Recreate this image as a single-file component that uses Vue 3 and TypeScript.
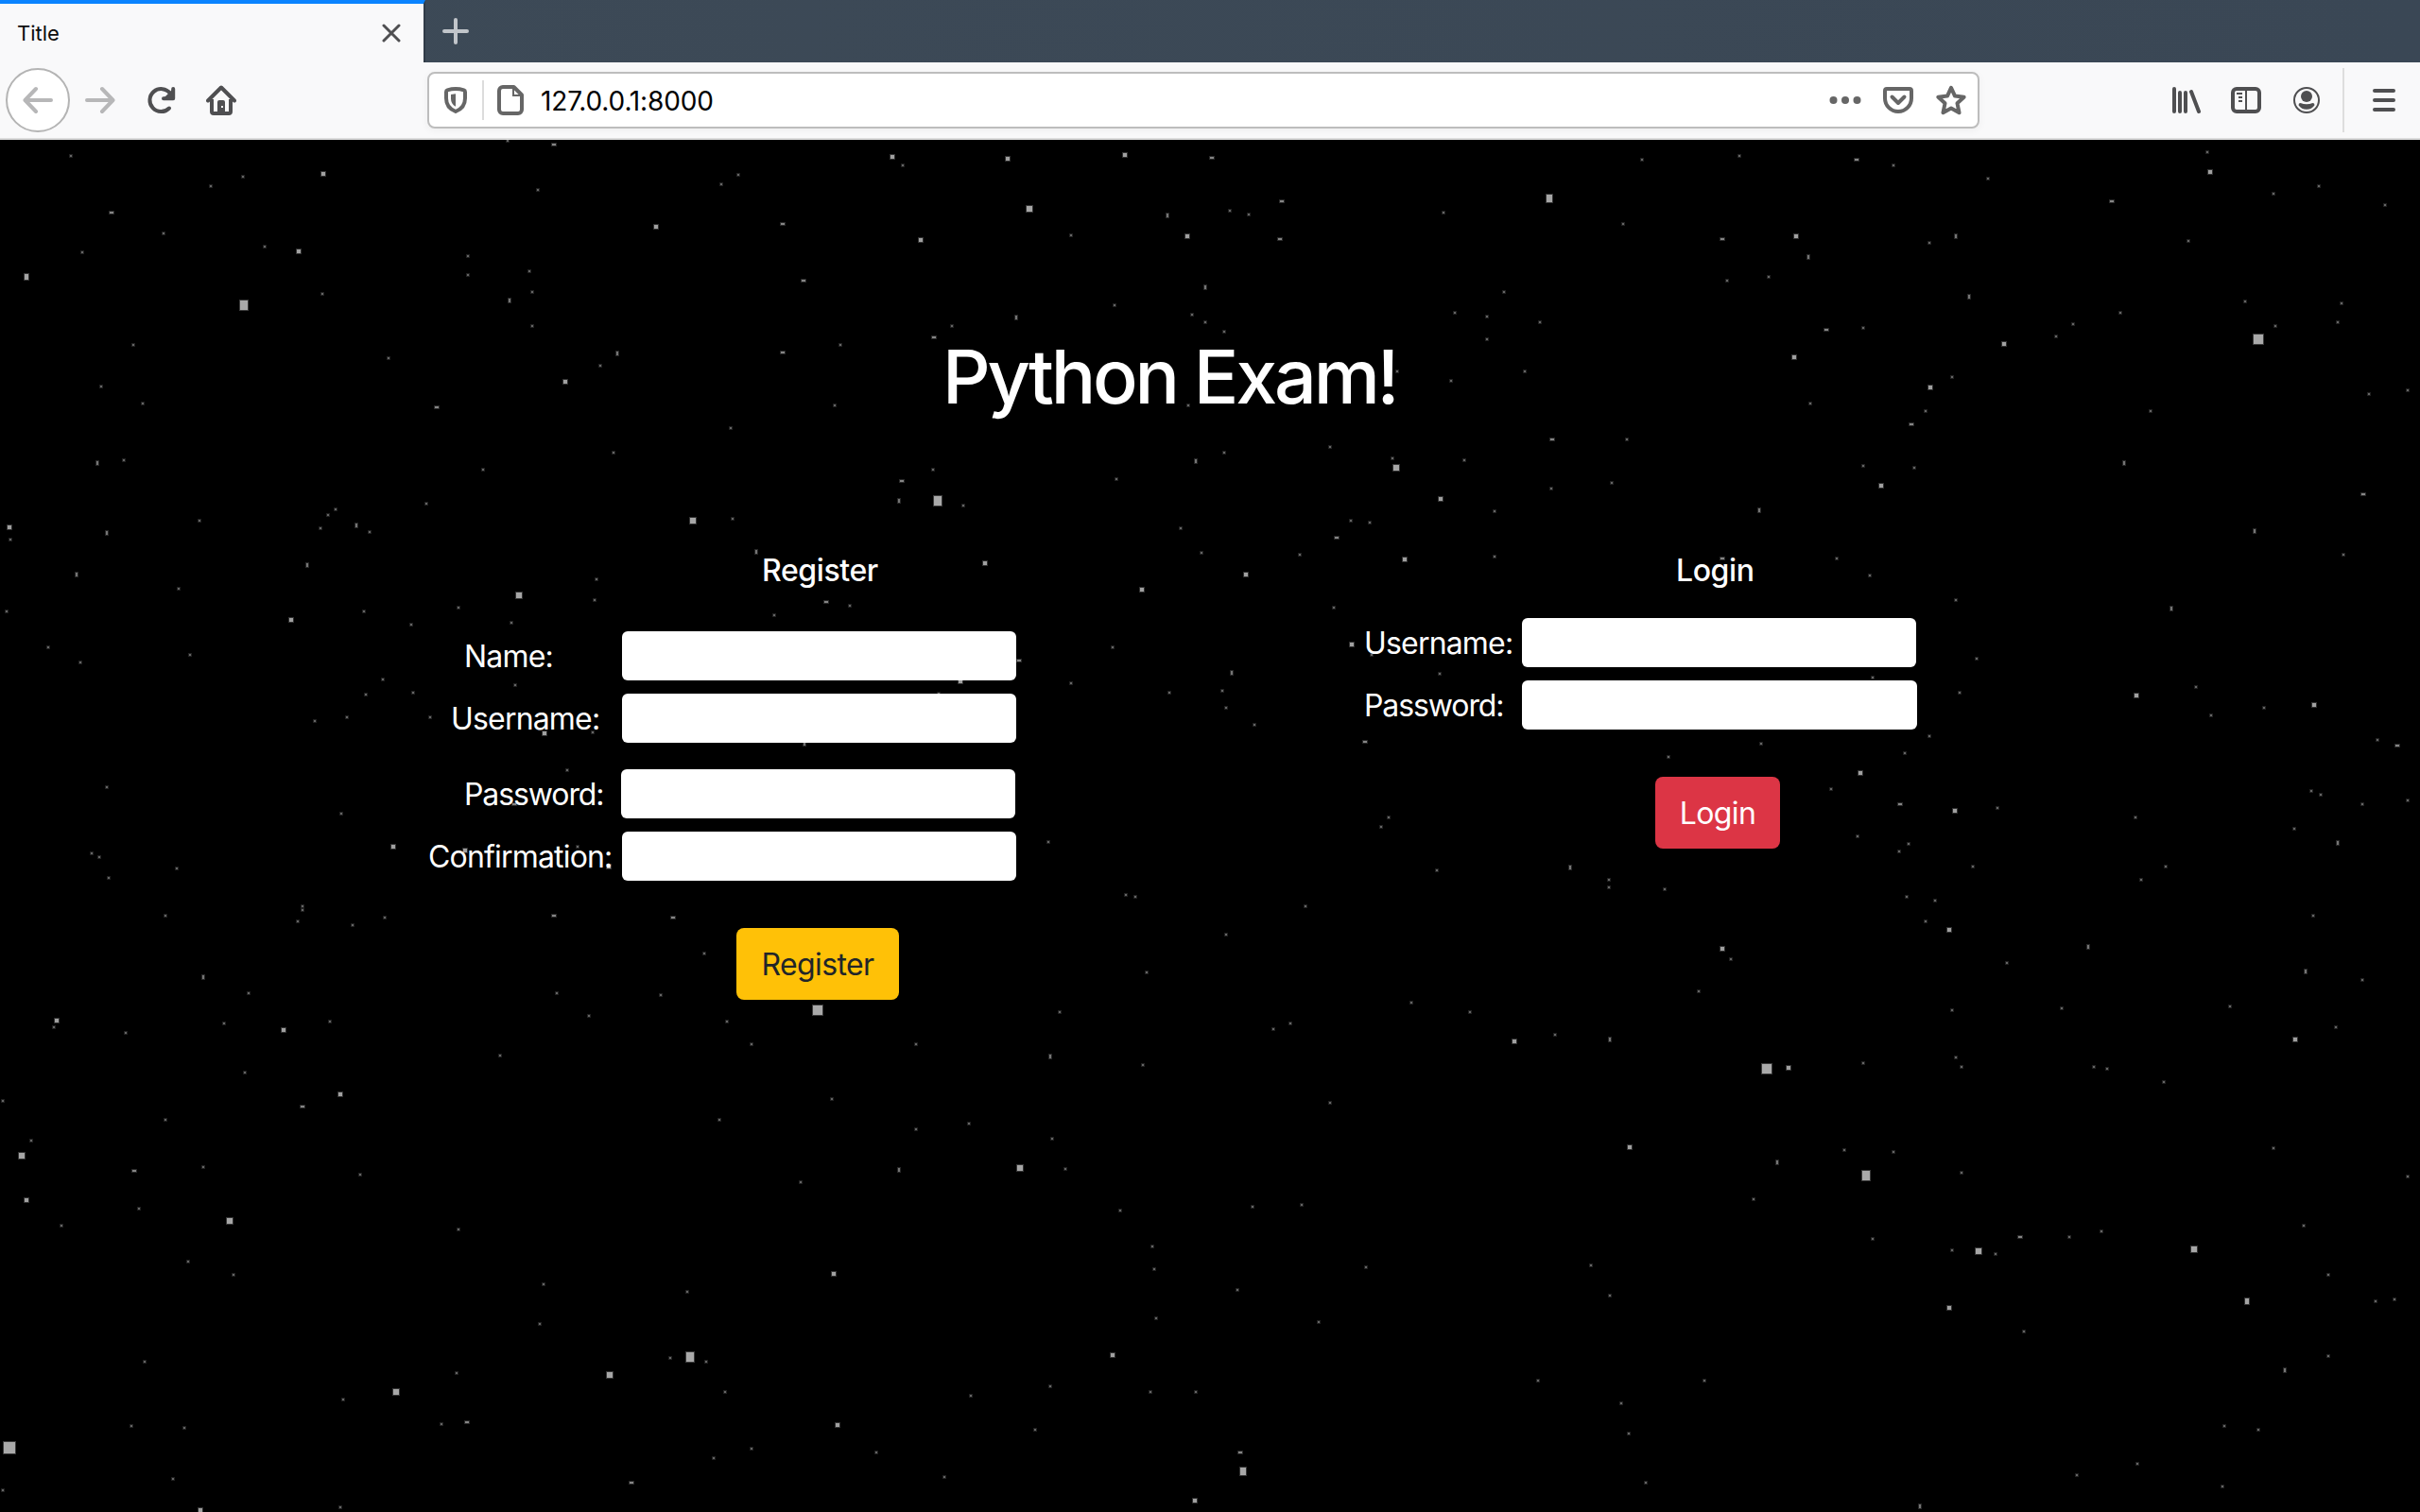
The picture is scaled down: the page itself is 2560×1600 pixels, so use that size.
<script setup lang="ts">
interface Star {
  x: number
  y: number
  w: number
  h: number
  fill: string
  edge: string
}

interface Sector {
  left: number
  top: number
  points: string
}

// Each sector is a 1568-unit square grid stretched over 1280 x 730 pixels.
// A point is "x,y,magnitude"; the magnitudes are listed in the table below.
const sectors: Sector[] = [
  {
    left: 0,
    top: 140,
    points: `92,54,t 315,101,t 273,123,t 418,95,c 144,183,b 211,230,t 106,273,t 342,260,t 387,271,c 34,329,v
      316,393,e 417,367,t 172,484,t 131,578,t 185,617,t 126,751,h 160,745,t 12,898,c 13,926,t 138,911,h
      258,883,t 99,1005,h 8,1089,t 62,1171,t 104,1205,t 246,1188,t 231,1038,t 377,1108,c 398,984,h 415,900,t
      425,870,t 434,857,t 461,894,h 479,908,t 552,844,t 503,514,t 565,625,b 606,282,t 606,324,t 685,316,t
      689,363,t 660,382,h 689,440,t 657,19,t 717,28,b 697,131,t 850,215,c 934,118,t 956,97,t 1014,209,b
      1041,338,b 1156,56,c 1170,75,t 1193,245,c 1305,60,c 1457,51,c 1334,174,d 1512,189,h 1538,237,c
      1387,234,t 1561,352,h 1444,393,t 1544,415,t 1561,432,t 1316,421,h 1233,440,t 1210,466,b 1089,484,t
      1014,501,b 799,502,h 778,531,t 732,567,c 626,767,t 795,728,t 947,673,t 1081,621,t 1209,767,t 1168,793,b
      1164,838,h 1215,838,e 1248,849,t 949,879,t 897,882,d 979,954,h 1276,980,c 1070,1068,b 1101,1076,t
      1003,1098,t 773,1016,t 770,1063,t 672,1052,d 662,1115,t 594,1081,t 471,1089,t 532,1119,t 496,1244,t
      474,1278,t 535,1274,t 407,1338,t 449,1330,t 557,1330,t 667,1257,t 705,1366,c 768,1364,t 734,1450,t
      666,1527,b 138,1489,t 442,1549,t 1042,1389,h 1244,1247,c 1216,1276,t 1320,1201,b 1387,1252,t
      1441,1171,t 1515,1274,t 1479,1040,c 1557,956,t 1530,900,t 1446,789,t 1549,748,h 1539,621,t`,
  },
  {
    left: 1280,
    top: 140,
    points: `2,58,b 93,157,b 25,179,t 50,187,t 90,243,b 302,183,t 439,151,v2 560,62,t 685,54,t 837,62,b 885,75,t
      1008,105,t 1292,45,t 1296,91,c 1437,123,t 1378,140,t 1522,166,t 1168,157,b 1268,247,t
      535,209,t 663,243,b 759,237,c 775,284,h 932,251,t 966,237,h 724,329,t 670,338,t 381,363,t 317,410,t
      359,419,t 427,432,t 359,470,t 18,454,t 242,544,t 407,544,t 312,565,t 983,374,h 798,449,b 846,445,t
      757,511,c 1179,410,t 1118,436,t 1096,464,t 1029,482,c 1341,385,t 1466,389,t 1461,432,t 1380,440,t
      1358,470,f 961,556,t 933,580,c 778,617,t 927,633,t 908,664,b 1218,633,t 1502,595,t 1552,587,t
      443,698,b 540,698,t 155,715,t 18,728,t 236,741,t 241,763,d 329,745,t 298,833,c 442,810,t 520,797,t
      368,861,t 182,883,t 207,887,t 164,922,b 116,960,t 252,971,c 46,1005,c 368,965,t 711,859,h 846,758,t
      912,763,t 869,803,c 1184,751,h 1494,823,b 1353,906,h 1468,960,t 663,969,b 812,969,t 855,1008,t
      966,1063,t 160,1081,t 183,1164,c 209,1187,t 28,1228,h 297,1231,t 15,1270,t 20,1308,t 57,1347,t
      200,1386,b 993,1196,t 858,1240,t 971,1274,t 1245,1083,h 1277,1261,t 1200,1280,c 1297,1325,t
      1365,1308,t 1430,1302,c 932,1373,t 714,1390,t 900,1411,t 594,1420,t 842,1457,c 804,1493,t 894,1527,b
      965,1543,c 1020,1536,t 1512,1381,t 1538,1394,b 1427,1497,t 1439,1506,t 1493,1527,t 1552,1519,t
      231,1557,t 1199,1557,t`,
  },
  {
    left: 0,
    top: 870,
    points: `119,71,t 128,80,t 229,105,t 141,127,t 509,56,c 602,64,c 748,55,t 789,102,c 214,213,t 391,191,t
      391,200,t 385,226,t 457,234,t 498,217,t 717,213,b 872,217,b 912,299,t 263,352,h 322,389,t 721,389,t
      856,393,t 763,440,t 942,454,t 1059,428,f 73,451,c 69,466,t 163,479,t 290,458,t 367,473,c 427,454,t
      317,569,t 648,531,t 974,505,t 1187,505,t 440,619,c 391,647,b 3,633,t 214,677,t 40,724,t 28,759,d
      173,793,b 263,784,t 466,801,t 34,859,c 180,879,t 79,917,t 297,906,d 594,926,t 243,999,t 302,1029,t
      704,1050,t 890,1068,t 699,1141,t 187,1226,t 591,1252,t 868,1218,t 894,1216,e 915,1226,t 790,1257,d
      513,1296,d 444,1312,t 572,1368,t 605,1364,b 939,1295,t 170,1373,t 238,1377,t 12,1422,g 224,1493,t
      3,1519,t 259,1563,c 440,1557,t 818,1502,b 925,1446,t 974,1424,t 1085,1371,c 1135,1433,t 1223,1489,t
      1080,1027,c 1037,819,t 932,677,t 1077,630,t 1187,698,t 1255,685,t 1164,791,h 1321,786,d 1380,788,t
      1363,720,t 1361,533,h 1481,552,t 1373,432,t 1486,342,t 1459,166,t 1471,170,t 1358,45,t 1451,883,t
      1493,965,t 1495,1016,t 1498,1128,t 1442,1212,c 1361,1282,t 1490,1295,t 1549,1295,t 1258,1304,t
      1341,1381,t 1548,1543,c`,
  },
  {
    left: 1280,
    top: 870,
    points: `221,11,t 839,32,t 905,49,t 893,67,t 1405,15,t 1461,47,h 466,103,h 293,109,t 516,131,t 516,148,t
      589,153,t 988,101,t 1238,101,t 1206,131,t 123,191,t 902,170,t 939,179,t 927,226,t 957,245,c 1429,213,t
      20,256,t 663,288,c 675,312,t 1138,284,h 1032,320,t 1419,340,h 1493,359,t 633,385,t 261,410,t 337,432,t
      961,428,t 1103,423,t 1321,419,t 1459,466,t 1406,494,c 104,458,t 82,470,t 394,498,c 447,484,t 518,494,h
      721,560,f 749,559,c 846,548,t 966,535,t 974,556,t 1145,556,t 1162,561,t 1236,591,t 155,638,t 543,739,c
      734,773,h 822,745,t 885,750,t 850,803,e 974,797,t 1378,741,t 1552,805,t 704,857,t 118,870,t 55,874,t
      1417,917,t 858,947,t 961,973,t 995,975,d 1018,982,t 1050,943,b 1113,943,t 1155,930,t 1275,971,d
      202,1012,t 493,1007,t 1449,1029,t 35,1063,t 518,1076,t 957,1104,c 1343,1089,v 1510,1089,t 1534,1085,t
      141,1136,t 1054,1158,t 1449,1214,t 1393,1246,h 425,1270,t 640,1270,t 533,1321,t 542,1390,t 1314,1373,t
      1358,1381,t 39,1433,b 43,1475,v2 564,1502,t 1201,1459,t 1123,1485,t 1312,1510,t 920,1555,h`,
  },
]

// width, height, core colour, colour of the one-pixel rim
const magnitudes: Record<string, [number, number, string, string]> = {
  t: [2, 2, '#666', '#202020'],
  h: [2, 4, '#757575', '#262626'],
  b: [4, 2, '#858585', '#282828'],
  c: [4, 4, '#a0a0a0', '#303030'],
  d: [6, 6, '#a6a6a6', '#333'],
  v: [4, 6, '#a4a4a4', '#333'],
  v2: [6, 8, '#a6a6a6', '#333'],
  e: [8, 10, '#a9a9a9', '#3a3a3a'],
  f: [10, 10, '#a9a9a9', '#3a3a3a'],
  g: [12, 12, '#a9a9a9', '#3a3a3a'],
}

const stars: Star[] = sectors.flatMap((sector) =>
  sector.points.split(/\s+/).map((point) => {
    const [px, py, kind] = point.split(',')
    const [w, h, fill, edge] = magnitudes[kind]
    const x = sector.left + (Number(px) * 1280) / 1568 - w / 2 + 0.35
    const y = sector.top + (Number(py) * 730) / 1568 - h / 2
    return { x: Math.round(x), y: Math.round(y), w, h, fill, edge }
  }),
)

const registerFields = [
  { id: 'name', label: 'Name:', type: 'text' },
  { id: 'username', label: 'Username:', type: 'text' },
  { id: 'password', label: 'Password:', type: 'password' },
  { id: 'confirmation', label: 'Confirmation:', type: 'password' },
]

const loginFields = [
  { id: 'login-username', label: 'Username:', type: 'text' },
  { id: 'login-password', label: 'Password:', type: 'password' },
]
</script>

<template>
  <div class="window">
    <header class="tabs">
      <div class="tab">
        <span class="tab-title">Title</span>
        <svg class="close" width="20" height="20" viewBox="0 0 20 20">
          <path d="M2 2l16 16M18 2L2 18" fill="none" stroke="#4f4f51" stroke-width="3" stroke-linecap="round" />
        </svg>
      </div>
      <svg class="plus" width="28" height="28" viewBox="0 0 28 28">
        <path d="M14 2v24M2 14h24" fill="none" stroke="#c1c5ca" stroke-width="4" stroke-linecap="round" />
      </svg>
    </header>

    <nav class="toolbar">
      <div class="nav-buttons">
        <span class="back">
          <svg width="32" height="32" viewBox="0 0 32 32">
            <path d="M30 16H3M14 4L2.500 16L14 28" fill="none" stroke="#b7b7b8" stroke-width="4" stroke-linecap="round" stroke-linejoin="round" />
          </svg>
        </span>
        <svg class="forward" width="32" height="32" viewBox="0 0 32 32">
          <path d="M2 16h27M18 4l11.500 12L18 28" fill="none" stroke="#b7b7b8" stroke-width="4" stroke-linecap="round" stroke-linejoin="round" />
        </svg>
        <svg class="reload" width="32" height="32" viewBox="0 0 32 32">
          <path d="M24 24.500A12 12 0 1 1 25 8.800" fill="none" stroke="#4f4f51" stroke-width="4" stroke-linecap="round" />
          <path d="M28.200 4v10.200H18" fill="none" stroke="#4f4f51" stroke-width="4" stroke-linecap="round" stroke-linejoin="round" />
          <path d="M27 5v8h-8z" fill="#4f4f51" />
        </svg>
        <svg class="home" width="32" height="32" viewBox="0 0 32 32">
          <path d="M2 16.500L16 2.500L30 16.500" fill="none" stroke="#4f4f51" stroke-width="4" stroke-linecap="round" stroke-linejoin="round" />
          <path d="M6 15v13a2 2 0 0 0 2 2h16a2 2 0 0 0 2-2V15" fill="none" stroke="#4f4f51" stroke-width="4" />
          <path d="M12 30V18a2 2 0 0 1 2-2h4a2 2 0 0 1 2 2v12z" fill="#4f4f51" />
          <rect x="16" y="22" width="2" height="2" fill="#f9f9fa" />
        </svg>
      </div>

      <div class="address">
        <svg class="shield" width="24" height="28" viewBox="0 0 24 28">
          <path d="M12 2C9 2 5.500 2.700 3.300 3.400Q2 3.800 2 5.200V12c0 7 3.500 11.500 10 14c6.500-2.500 10-7 10-14V5.200Q22 3.800 20.700 3.400C18.500 2.700 15 2 12 2z" fill="none" stroke="#666" stroke-width="4" />
          <path d="M12 7.200L7 8v4.500c0 3.800 1.600 6.300 5 8.300z" fill="#666" />
        </svg>
        <i class="separator"></i>
        <svg class="page-icon" width="28" height="32" viewBox="0 0 28 32">
          <path d="M6 2h11.500L26 10.500V26a4 4 0 0 1-4 4H6a4 4 0 0 1-4-4V6a4 4 0 0 1 4-4z" fill="none" stroke="#666" stroke-width="4" stroke-linejoin="round" />
          <path d="M17 2v9h9" fill="none" stroke="#666" stroke-width="2" />
        </svg>
        <span class="url">127.0.0.1:8000</span>
        <svg class="dots" width="34" height="10" viewBox="0 0 34 10">
          <circle cx="4.500" cy="5" r="4" fill="#666" />
          <circle cx="17" cy="5" r="4" fill="#666" />
          <circle cx="29.500" cy="5" r="4" fill="#666" />
        </svg>
        <svg class="pocket" width="32" height="28" viewBox="0 0 32 28">
          <path d="M4 2h24a2 2 0 0 1 2 2v8a14 14 0 0 1-28 0V4a2 2 0 0 1 2-2z" fill="none" stroke="#666" stroke-width="4" />
          <path d="M9.500 10.500L16 17l6.500-6.500" fill="none" stroke="#666" stroke-width="4" stroke-linecap="round" stroke-linejoin="round" />
        </svg>
        <svg class="bookmark" width="32" height="32" viewBox="0 0 32 32">
          <path d="M16 2.800L20 11.600L29.600 12.700L22.500 19.300L24.500 29.200L16 24.500L7.500 29.200L9.500 19.300L2.400 12.700L12 11.600z" fill="none" stroke="#666" stroke-width="4" stroke-linejoin="round" />
        </svg>
      </div>

      <div class="tools">
        <svg width="30" height="28" viewBox="0 0 30 28">
          <path d="M2 2v24M8 6v20M14 6v20M20 5l8 21" fill="none" stroke="#4f4f51" stroke-width="4" stroke-linecap="round" />
        </svg>
        <svg class="sidebar-icon" width="32" height="28" viewBox="0 0 32 28">
          <rect x="2" y="2" width="28" height="24" rx="4" fill="none" stroke="#4f4f51" stroke-width="4" />
          <path d="M16 3v22M6 7h6M8 11h4M8 15h4" fill="none" stroke="#4f4f51" stroke-width="2" />
        </svg>
        <svg class="account" width="28" height="28" viewBox="0 0 28 28">
          <circle cx="14" cy="14" r="13" fill="none" stroke="#4f4f51" stroke-width="2" />
          <circle cx="14" cy="10" r="6" fill="#4f4f51" />
          <path d="M5.500 19.200Q5.500 17 7.500 17Q14 19.600 20.500 17Q22.500 17 22.500 19.200Q19.500 23.800 14 23.800Q8.500 23.800 5.500 19.200z" fill="#4f4f51" />
        </svg>
        <i class="divider"></i>
        <svg class="menu" width="24" height="24" viewBox="0 0 24 24">
          <path d="M2 2h20M2 12h20M2 22h20" fill="none" stroke="#4f4f51" stroke-width="4" stroke-linecap="round" />
        </svg>
      </div>
    </nav>

    <main class="page">
      <svg class="sky" width="2560" height="1452" viewBox="0 148 2560 1452">
        <g v-for="(star, i) in stars" :key="i">
          <rect :x="star.x - 1" :y="star.y - 1" :width="star.w + 2" :height="star.h + 2" :fill="star.edge" />
          <rect :x="star.x" :y="star.y" :width="star.w" :height="star.h" :fill="star.fill" />
        </g>
      </svg>

      <h1 class="heading">Python Exam!</h1>

      <div class="forms">
        <form class="form register" @submit.prevent>
          <h5 class="form-title">Register</h5>
          <div v-for="field in registerFields" :key="field.id" class="field" :class="field.id">
            <label class="label" :for="field.id">{{ field.label }}</label>
            <input :id="field.id" class="input" :type="field.type" />
          </div>
          <button class="button warning" type="submit">Register</button>
        </form>

        <form class="form login" @submit.prevent>
          <h5 class="form-title">Login</h5>
          <div v-for="field in loginFields" :key="field.id" class="field" :class="field.id">
            <label class="label" :for="field.id">{{ field.label }}</label>
            <input :id="field.id" class="input" :type="field.type" />
          </div>
          <button class="button danger" type="submit">Login</button>
        </form>
      </div>
    </main>
  </div>
</template>

<style>
body {
  margin: 0;
  background: #000;
}
</style>

<style scoped>
.window {
  display: flex;
  flex-direction: column;
  width: 2560px;
  height: 1600px;
  overflow: hidden;
  font-family: Inter, "Liberation Sans", sans-serif;
}

svg {
  display: block;
  flex: none;
}

.tabs {
  display: flex;
  flex: none;
  align-items: flex-start;
  height: 66px;
  background: linear-gradient(90deg, #3d4a57, #3a4755);
}

.tab {
  display: flex;
  align-items: center;
  justify-content: space-between;
  box-sizing: border-box;
  width: 450px;
  height: 66px;
  padding: 0 24px 0 18px;
  border-top: 4px solid #0a84ff;
  border-right: 2px solid #303b47;
  background: #f9f9fa;
}

.tab-title {
  font-size: 22px;
  line-height: 60px;
  color: #0c0c0d;
}

.plus {
  margin: 19px 0 0 18px;
}

.toolbar {
  display: flex;
  flex: none;
  align-items: center;
  box-sizing: border-box;
  height: 82px;
  border-bottom: 2px solid #dcdcdc;
  background: #f9f9fa;
}

.nav-buttons {
  display: flex;
  align-items: center;
  width: 452px;
}

.back {
  display: flex;
  align-items: center;
  justify-content: center;
  box-sizing: border-box;
  width: 68px;
  height: 68px;
  margin-left: 6px;
  border: 2px solid #b4b4b4;
  border-radius: 50%;
  background: #fff;
}

.forward {
  margin-left: 16px;
}

.reload {
  margin-left: 33px;
}

.home {
  margin-left: 31px;
}

.address {
  display: flex;
  align-items: center;
  box-sizing: border-box;
  width: 1642px;
  height: 60px;
  padding-left: 16px;
  border: 2px solid #bdbdbd;
  border-radius: 8px;
  background: #fff;
  box-shadow: 0 2px 8px rgba(0, 0, 0, 0.05);
}

.separator {
  width: 2px;
  height: 42px;
  margin-left: 16px;
  background: #dcdcdc;
}

.page-icon {
  margin-left: 14px;
}

.url {
  flex: 1;
  margin-left: 18px;
  padding-top: 2px;
  font-size: 28px;
  line-height: 34px;
  letter-spacing: -0.15px;
  color: #000;
}

.pocket {
  margin-left: 23px;
}

.bookmark {
  margin: 0 12px 0 24px;
}

.tools {
  display: flex;
  align-items: center;
  margin-left: 204px;
}

.sidebar-icon {
  margin-left: 32px;
}

.account {
  margin-left: 34px;
}

.divider {
  width: 2px;
  height: 68px;
  margin-left: 24px;
  background: #dedede;
}

.menu {
  margin-left: 30px;
}

.page {
  position: relative;
  flex: 1;
  background: #000;
  color: #fff;
}

.sky {
  position: absolute;
  top: 0;
  left: 0;
}

.heading {
  position: relative;
  margin: 0;
  padding: 202px 0 0 997px;
  font-size: 79px;
  font-weight: 500;
  line-height: 96px;
  letter-spacing: -3.2px;
  white-space: nowrap;
}

.forms {
  position: relative;
  display: flex;
  align-items: flex-start;
  gap: 366px;
  padding: 138px 0 0 452px;
}

.form {
  display: flex;
  flex-direction: column;
  align-items: flex-start;
  width: 624px;
  font-size: 32px;
  font-weight: 400;
  letter-spacing: -0.82px;
}

.form-title {
  margin: 0 0 0 354px;
  font-size: 32px;
  font-weight: 500;
  line-height: 40px;
  letter-spacing: -0.4px;
}

.field {
  display: flex;
  align-self: stretch;
  align-items: center;
  justify-content: space-between;
  margin-top: 14px;
  line-height: 52px;
}

.label {
  padding: 1px 0 0 1px;
  line-height: 51px;
  white-space: nowrap;
}

.input {
  box-sizing: border-box;
  width: 417px;
  height: 52px;
  padding: 0 12px;
  border: 0;
  border-radius: 6px;
  background: #fff;
  font: inherit;
}

.name {
  margin-top: 44px;
  padding: 0 1px 0 38px;
}

.username {
  padding: 0 1px 0 24px;
}

.password {
  margin-top: 28px;
  padding: 0 2px 0 38px;
}

.confirmation {
  padding-right: 1px;
}

.button {
  height: 76px;
  padding: 2px 0 0;
  border: 0;
  border-radius: 8px;
  font: inherit;
  line-height: 74px;
  letter-spacing: -0.6px;
}

.warning {
  width: 172px;
  margin: 50px 0 0 327px;
  background: #ffc107;
  color: #212529;
}

.login {
  width: 586px;
}

.login .form-title {
  margin-left: 331px;
}

.login-username {
  margin-top: 30px;
  padding-right: 1px;
}

.login-password .input {
  width: 418px;
}

.login-password .label,
.password .label {
  letter-spacing: -1.1px;
}

.danger {
  width: 132px;
  margin: 50px 0 0 309px;
  background: #dc3545;
  color: #fff;
}
</style>
